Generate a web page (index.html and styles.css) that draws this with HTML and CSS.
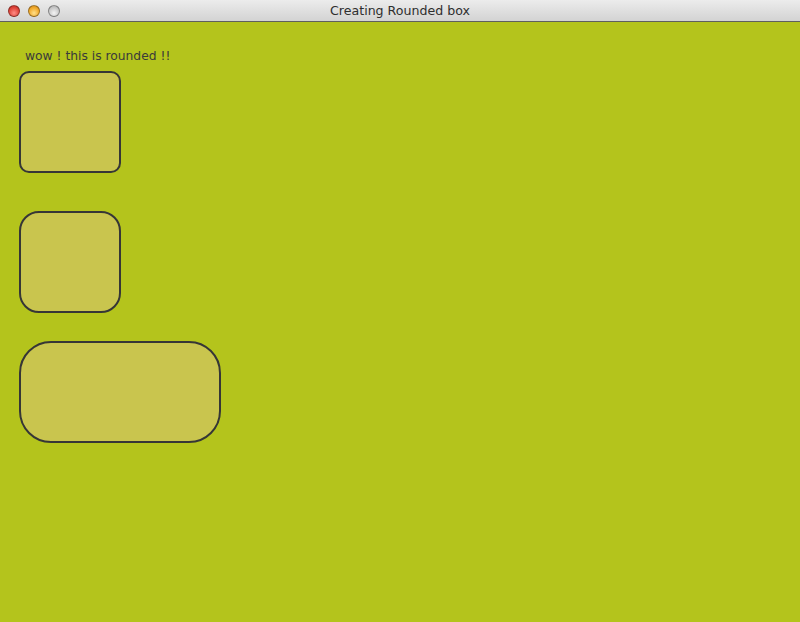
FILE: index.html
```html
<!DOCTYPE html>
<html>
<head>
<meta charset="utf-8">
<link rel="stylesheet" href="styles.css">
</head>
<body>
<div class="window">
  <div class="titlebar">
    <div class="lights">
      <span class="light red"></span>
      <span class="light yellow"></span>
      <span class="light gray"></span>
    </div>
    <div class="title">Creating Rounded box</div>
  </div>
  <div class="content">
    <div class="label">wow ! this is rounded !!</div>
    <div class="box box-a"></div>
    <div class="box box-b"></div>
    <div class="box box-c"></div>
  </div>
</div>
</body>
</html>
```
FILE: styles.css
```css
html, body {
  margin: 0;
  padding: 0;
  width: 800px;
  height: 622px;
  overflow: hidden;
  background: #b4c41c;
}
.window {
  display: flex;
  flex-direction: column;
  width: 800px;
  height: 622px;
}
.titlebar {
  position: relative;
  height: 21px;
  flex: none;
  background: linear-gradient(#ececec, #d3d3d3);
  border-bottom: 1px solid #5f5f5f;
  display: flex;
  align-items: center;
  justify-content: center;
}
.lights {
  position: absolute;
  left: 8px;
  top: 5px;
  display: flex;
  gap: 8px;
}
.light {
  width: 12px;
  height: 12px;
  border-radius: 50%;
  box-sizing: border-box;
  border: 1px solid rgba(0,0,0,0.35);
}
.red { background: radial-gradient(circle at 50% 70%, #ff8d85, #e0443a 60%, #b52a22); }
.yellow { background: radial-gradient(circle at 50% 70%, #ffe08a, #f1a92a 60%, #c7811a); }
.gray { background: radial-gradient(circle at 50% 70%, #f4f4f4, #c8c8c8 60%, #a5a5a5); }
.title {
  font-family: "DejaVu Sans", "Liberation Sans", sans-serif;
  font-size: 12.6px;
  color: #2e2e2e;
}
.content {
  flex: 1;
  padding: 26px 0 0 19px;
  display: flex;
  flex-direction: column;
  align-items: flex-start;
}
.label {
  font-family: "DejaVu Sans", "Liberation Sans", sans-serif;
  font-size: 12.3px;
  line-height: 16px;
  color: #3a3a3a;
  margin-left: 6px;
  margin-bottom: 7px;
}
.box {
  box-sizing: border-box;
  background: #c9c54e;
  border: 2px solid #363636;
}
.box-a {
  width: 102px;
  height: 102px;
  border-radius: 10px;
}
.box-b {
  width: 102px;
  height: 102px;
  border-radius: 20px;
  margin-top: 38px;
}
.box-c {
  width: 202px;
  height: 102px;
  border-radius: 32px;
  margin-top: 28px;
}
```
